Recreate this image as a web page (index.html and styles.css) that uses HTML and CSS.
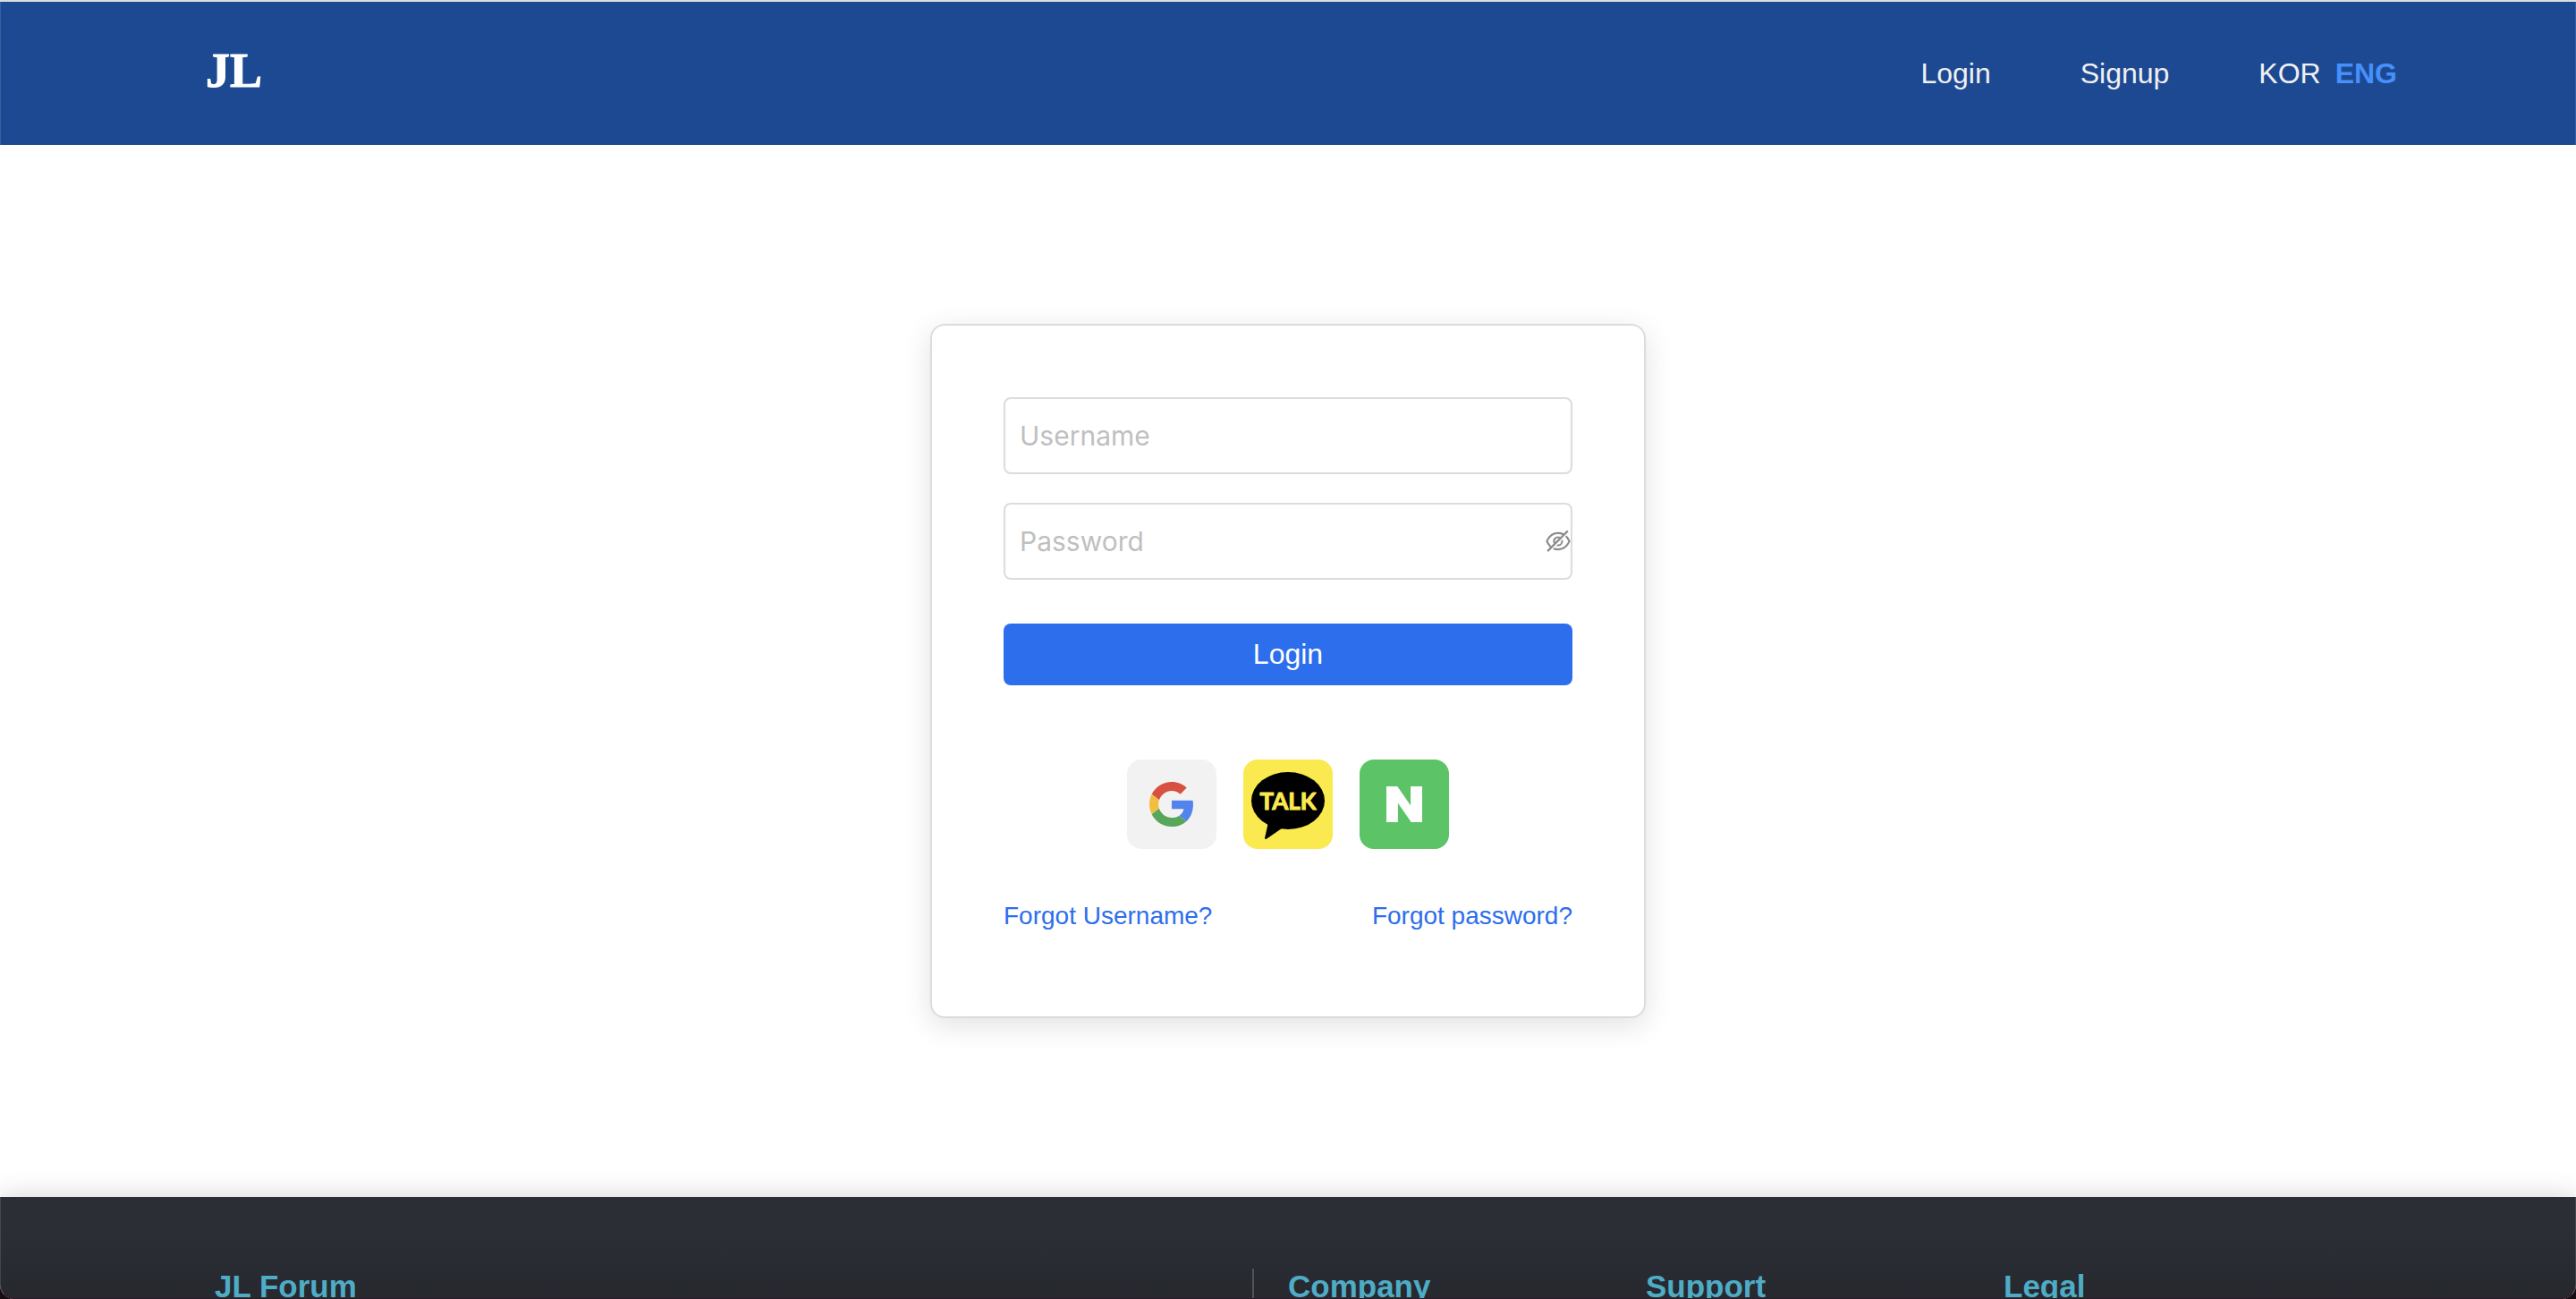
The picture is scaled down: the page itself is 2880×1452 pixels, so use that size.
FILE: index.html
```html
<!DOCTYPE html>
<html lang="en">
<head>
<meta charset="utf-8">
<meta name="viewport" content="width=device-width, initial-scale=1">
<title>JL Forum - Login</title>
<link rel="stylesheet" href="styles.css">
</head>
<body>
<div class="page">
  <header class="header">
    <a class="logo" href="#">JL</a>
    <nav class="nav">
      <a href="#">Login</a>
      <a href="#">Signup</a>
      <div class="lang">
        <button type="button">KOR</button>
        <button type="button" class="active">ENG</button>
      </div>
    </nav>
  </header>

  <main class="main">
    <form class="card">
      <input class="field" type="text" placeholder="Username" aria-label="Username">
      <div class="password">
        <input class="field" type="password" placeholder="Password" aria-label="Password">
        <button type="button" class="reveal" aria-label="Show password">
          <svg viewBox="64 64 896 896" fill="currentColor" aria-hidden="true">
            <path d="M942.2 486.2Q889.47 375.11 816.7 305l-50.88 50.88C807.31 395.53 843.45 447.4 874.7 512 791.5 684.2 673.4 766 512 766q-72.67 0-133.87-22.38L323 798.75Q408 838 512 838q288.3 0 430.2-300.3a60.29 60.29 0 000-51.5zm-63.57-320.64L836 122.88a8 8 0 00-11.32 0L715.31 232.2Q624.86 186 512 186q-288.3 0-430.2 300.3a60.3 60.3 0 000 51.5q56.69 119.4 136.5 191.41L112.48 835a8 8 0 000 11.31L155.17 889a8 8 0 0011.31 0l712.15-712.12a8 8 0 000-11.32zM149.3 512C232.6 339.8 350.7 258 512 258c54.54 0 104.13 9.36 149.12 28.39l-70.3 70.3a176 176 0 00-238.13 238.13l-83.42 83.42C223.1 637.49 183.3 582.28 149.3 512zm246.7 0a112.11 112.11 0 01146.2-106.69L401.31 546.2A112 112 0 01396 512z"/>
            <path d="M508 624c-3.46 0-6.87-.16-10.25-.47l-52.82 52.82a176.09 176.09 0 00227.42-227.42l-52.82 52.82c.31 3.38.47 6.79.47 10.25a111.94 111.94 0 01-112 112z"/>
          </svg>
        </button>
      </div>
      <button type="submit" class="submit">Login</button>

      <div class="social">
        <button type="button" class="tile google" aria-label="Log in with Google">
          <svg viewBox="0 0 48 48" aria-hidden="true">
            <path fill="#d85140" d="M24 9.5c3.54 0 6.71 1.22 9.21 3.6l6.85-6.85C35.9 2.38 30.47 0 24 0 14.62 0 6.51 5.38 2.56 13.22l7.98 6.19C12.43 13.72 17.74 9.5 24 9.5z"/>
            <path fill="#5383ec" d="M46.98 24.55c0-1.57-.15-3.09-.38-4.55H24v9.02h12.94c-.58 2.96-2.26 5.48-4.78 7.18l7.73 6c4.51-4.18 7.09-10.36 7.09-17.65z"/>
            <path fill="#f1be42" d="M10.53 28.59c-.48-1.45-.76-2.99-.76-4.59s.27-3.14.76-4.59l-7.98-6.19C.92 16.46 0 20.12 0 24c0 3.88.92 7.54 2.56 10.78l7.97-6.19z"/>
            <path fill="#58a55c" d="M24 48c6.48 0 11.93-2.13 15.89-5.81l-7.73-6c-2.15 1.45-4.92 2.3-8.16 2.3-6.26 0-11.57-4.22-13.47-9.91l-7.98 6.19C6.51 42.62 14.62 48 24 48z"/>
          </svg>
        </button>
        <button type="button" class="tile kakao" aria-label="Log in with KakaoTalk">
          <svg viewBox="0 0 100 100" aria-hidden="true">
            <ellipse cx="50" cy="46" rx="41" ry="32"/>
            <path d="M28 70 24 88Q24 90 27 88L43 77z"/>
            <text class="talk" x="50" y="56" text-anchor="middle">TALK</text>
          </svg>
        </button>
        <button type="button" class="tile naver" aria-label="Log in with Naver">
          <svg viewBox="0 0 24 24" aria-hidden="true">
            <path fill="#fff" d="M16.273 12.845 7.376 0H0v24h7.726V11.156L16.624 24H24V0h-7.727z"/>
          </svg>
        </button>
      </div>

      <div class="help">
        <a href="#">Forgot Username?</a>
        <a href="#">Forgot password?</a>
      </div>
    </form>
  </main>

  <footer class="footer">
    <div class="footer-grid">
      <section class="about"><h2>JL Forum</h2></section>
      <section><h2>Company</h2></section>
      <section><h2>Support</h2></section>
      <section><h2>Legal</h2></section>
    </div>
  </footer>
</div>
</body>
</html>
```

FILE: styles.css
```css
*,
*::before,
*::after {
  box-sizing: border-box;
}

html {
  background: #160c12;
}

body {
  margin: 0;
  font-family: "Liberation Sans", Arial, sans-serif;
  font-size: 32px;
}

a {
  color: inherit;
  text-decoration: none;
}

button {
  padding: 0;
  border: 0;
  background: none;
  color: inherit;
  font: inherit;
  cursor: pointer;
}

svg {
  display: block;
}

.page {
  position: relative;
  display: flex;
  flex-direction: column;
  height: 100vh;
  overflow: hidden;
  border-top: 2px solid #dedede;
  border-radius: 0 0 16px 16px;
  background: #fff;
}

.page::after {
  content: "";
  position: absolute;
  inset: 0;
  border: 1px solid rgba(255, 255, 255, 0.12);
  border-top: 0;
  border-bottom-color: #2a1a28;
  border-radius: 0 0 16px 16px;
  pointer-events: none;
}

.header {
  flex: none;
  display: flex;
  align-items: center;
  justify-content: space-between;
  height: 160px;
  padding: 0 200px 0 230px;
  background: #1d4993;
  color: #f0f0f0;
}

.logo {
  padding-bottom: 6px;
  color: #fff;
  font: bold 54px/64px "Liberation Serif", "Times New Roman", serif;
  -webkit-text-stroke: 1px #fff;
}

.nav {
  display: flex;
  align-items: center;
  gap: 100px;
}

.lang {
  display: flex;
  gap: 16px;
}

.lang .active {
  color: #4590fb;
  font-weight: bold;
}

.main {
  flex: none;
  display: flex;
  justify-content: center;
  padding: 200px 32px;
}

.card {
  display: flex;
  flex-direction: column;
  width: 100%;
  max-width: 800px;
  padding: 80px;
  border: 2px solid #dcdcdc;
  border-radius: 16px;
  background: #fff;
  box-shadow: 0 8px 32px rgba(0, 0, 0, 0.12);
}

.field {
  display: block;
  width: 100%;
  height: 86px;
  padding: 0 16px;
  border: 2px solid #dcdcdc;
  border-radius: 8px;
  background: #fff;
  color: #222;
  font: 30px Inter, "Liberation Sans", sans-serif;
}

.field::placeholder {
  color: #bfbfbf;
  opacity: 1;
}

.password {
  position: relative;
  margin-top: 32px;
}

.reveal {
  position: absolute;
  top: 0;
  right: 2px;
  bottom: 0;
  width: 28px;
  color: #8c8c8c;
}

.submit {
  height: 69px;
  margin-top: 49px;
  border-radius: 8px;
  background: #2d6eed;
  color: #fff;
}

.social {
  display: flex;
  justify-content: center;
  gap: 30px;
  margin-top: 83px;
}

.tile {
  display: grid;
  place-items: center;
  width: 100px;
  height: 100px;
  border-radius: 16px;
}

.google {
  background: #f2f2f2;
}

.google svg {
  width: 50px;
}

.kakao {
  background: #fae94f;
}

.kakao svg {
  width: 100px;
}

.talk {
  fill: #fae94f;
  stroke: #fae94f;
  stroke-width: 1px;
  stroke-linejoin: round;
  font: bold 26px Lato, "Liberation Sans", sans-serif;
}

.naver {
  background: #5cc467;
}

.naver svg {
  width: 40px;
}

.help {
  display: flex;
  justify-content: space-between;
  margin: 58px 0 16px;
  color: #2d6eed;
  font-size: 28px;
  line-height: 33px;
}

.footer {
  flex: none;
  padding: 80px 240px;
  background: linear-gradient(#2b2e35, #2b2e35 40px, #26282e 120px);
  box-shadow: 0 0 28px rgba(0, 0, 0, 0.18);
}

.footer-grid {
  display: grid;
  grid-template-columns: 1162fr 438fr 400fr 400fr;
  min-height: 240px;
}

.about {
  border-right: 2px solid #505257;
}

.about + section {
  padding-left: 38px;
}

.footer h2 {
  margin: 0;
  color: #4eacc6;
  font-size: 35px;
  line-height: 40px;
}
```
